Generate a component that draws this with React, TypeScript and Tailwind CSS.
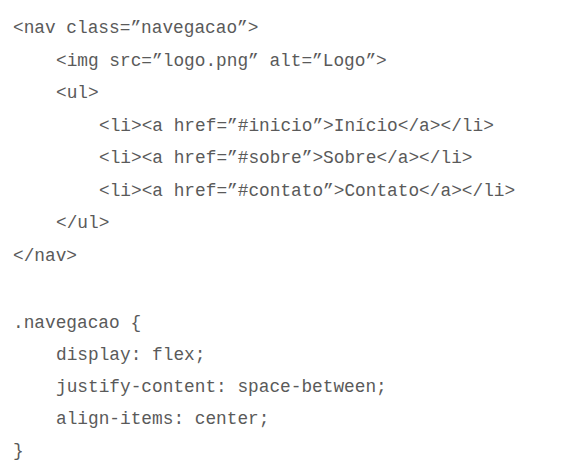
export default function App() {
  const block1: [number, string][] = [
    [0, "<nav class=”navegacao”>"],
    [1, "<img src=”logo.png” alt=”Logo”>"],
    [1, "<ul>"],
    [2, "<li><a href=”#inicio”>Início</a></li>"],
    [2, "<li><a href=”#sobre”>Sobre</a></li>"],
    [2, "<li><a href=”#contato”>Contato</a></li>"],
    [1, "</ul>"],
    [0, "</nav>"],
  ];
  const block2: [number, string][] = [
    [0, ".navegacao {"],
    [1, "display: flex;"],
    [1, "justify-content: space-between;"],
    [1, "align-items: center;"],
    [0, "}"],
  ];
  const pad = (n: number) => (n === 0 ? "pl-[13px]" : n === 1 ? "pl-[56px]" : "pl-[99px]");
  return (
    <div className="w-[565px] h-[472px] bg-white overflow-hidden pt-[12px] text-[#5a5a5a] text-[17.8px] whitespace-pre [font-family:'Liberation_Mono',monospace]">
      <div className="flex flex-col">
        {block1.map(([n, t], i) => (
          <div key={i} className={`leading-[32.5px] ${pad(n)}`}>{t}</div>
        ))}
      </div>
      <div className="flex flex-col mt-[35px]">
        {block2.map(([n, t], i) => (
          <div key={i} className={`leading-[32px] ${pad(n)}`}>{t}</div>
        ))}
      </div>
    </div>
  );
}
